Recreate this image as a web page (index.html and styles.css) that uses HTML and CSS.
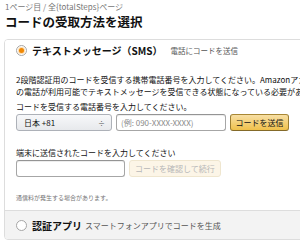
FILE: index.html
```html
<!DOCTYPE html>
<html lang="ja">
<head>
<meta charset="utf-8">
<link rel="stylesheet" href="styles.css">
</head>
<body>
<div class="page">
  <div class="step">1ページ目 / 全{totalSteps}ページ</div>
  <h1 class="title">コードの受取方法を選択</h1>
  <div class="box">
    <section class="opt opt-active">
      <div class="opt-head">
        <span class="radio radio-on"></span>
        <span class="opt-label">テキストメッセージ（SMS）</span>
        <span class="opt-sub">電話にコードを送信</span>
      </div>
      <div class="opt-body">
        <p class="desc">2段階認証用のコードを受信する携帯電話番号を入力してください。Amazonアカウント<br>の電話が利用可能でテキストメッセージを受信できる状態になっている必要があります。</p>
        <div class="field-label">コードを受信する電話番号を入力してください。</div>
        <div class="row">
          <div class="select"><span>日本 +81</span><span class="arrows">÷</span></div>
          <div class="input"><span class="ph">(例: 090-XXXX-XXXX)</span></div>
          <div class="btn btn-primary">コードを送信</div>
        </div>
        <div class="field-label second">端末に送信されたコードを入力してください</div>
        <div class="row">
          <div class="input input-code"></div>
          <div class="btn btn-disabled">コードを確認して続行</div>
        </div>
        <div class="note">通信料が発生する場合があります。</div>
      </div>
    </section>
    <section class="opt opt-other">
      <div class="opt-head">
        <span class="radio"></span>
        <span class="opt-label">認証アプリ</span>
        <span class="opt-sub2">スマートフォンアプリでコードを生成</span>
      </div>
    </section>
  </div>
</div>
</body>
</html>
```
FILE: styles.css
```css
html, body {
  margin: 0;
  padding: 0;
  background: #fff;
  overflow: hidden;
}
body {
  font-family: "Noto Sans CJK JP", "Liberation Sans", sans-serif;
  color: #111;
}
.page {
  padding: 1px 0 0 4px;
  width: 340px;
}
.step {
  font-size: 8px;
  line-height: 11px;
  color: #767676;
  padding-left: 1px;
}
.title {
  margin: 1px 0 0 1px;
  font-size: 12.5px;
  line-height: 18px;
  font-weight: 700;
  color: #111;
}
.box {
  margin-top: 8px;
  border: 1px solid #ddd;
  border-radius: 4px;
  overflow: hidden;
}
.opt-active {
  background: #fff;
  padding: 2px 0 8px 11px;
}
.opt-head {
  display: flex;
  align-items: center;
  height: 16px;
}
.opt-other {
  background: #f3f3f3;
  border-top: 1px solid #ddd;
  padding: 6px 0 6px 11px;
}
.radio {
  width: 9px;
  height: 9px;
  border: 1px solid #a6a6a6;
  border-radius: 50%;
  background: #fff;
  display: flex;
  align-items: center;
  justify-content: center;
  flex: none;
}
.radio-on::after {
  content: "";
  width: 5px;
  height: 5px;
  border-radius: 50%;
  background: #f08804;
  box-shadow: 0 0 1px 1px #fbd8a8;
}
.opt-label {
  margin-left: 5px;
  font-size: 10px;
  font-weight: 700;
  white-space: nowrap;
}
.opt-sub {
  margin-left: 8px;
  font-size: 7.5px;
  color: #555;
  white-space: nowrap;
}
.opt-sub2 {
  margin-left: 3px;
  font-size: 8px;
  color: #555;
  white-space: nowrap;
}
.opt-body {
  padding-top: 16px;
}
.desc {
  margin: 0;
  font-size: 8px;
  line-height: 12px;
  white-space: nowrap;
}
.field-label {
  margin-top: 3px;
  font-size: 8px;
  line-height: 11px;
}
.field-label.second {
  margin-top: 16px;
}
.row {
  display: flex;
  gap: 4px;
  margin-top: 2px;
}
.select {
  width: 81px;
  height: 15px;
  border: 1px solid #adb1b8;
  border-radius: 3px;
  background: linear-gradient(#f7f8fa, #e7e9ec);
  font-size: 8px;
  display: flex;
  align-items: center;
  justify-content: space-between;
  padding: 0 6px 0 7px;
}
.arrows {
  font-size: 7px;
  color: #555;
}
.input {
  width: 104px;
  height: 15px;
  border: 1px solid #a6a6a6;
  border-top-color: #949494;
  border-radius: 3px;
  box-shadow: inset 0 1px 0 rgba(0,0,0,.07);
  background: #fff;
  display: flex;
  align-items: center;
  padding-left: 4px;
}
.input-code {
  width: 103px;
}
.ph {
  font-size: 8px;
  color: #8a8a8a;
  white-space: nowrap;
}
.btn {
  height: 15px;
  border-radius: 3px;
  font-size: 8px;
  display: flex;
  align-items: center;
  justify-content: center;
  white-space: nowrap;
}
.btn-primary {
  width: 57px;
  background: linear-gradient(#f7dfa5, #f0c14b);
  border: 1px solid;
  border-color: #a88734 #9c7e31 #846a29;
  color: #111;
}
.btn-disabled {
  width: 90px;
  background: #fcf5e7;
  border: 1px solid #efe6cf;
  color: #b7b7b7;
}
.note {
  margin-top: 16px;
  font-size: 6px;
  line-height: 9px;
  color: #767676;
}
```
